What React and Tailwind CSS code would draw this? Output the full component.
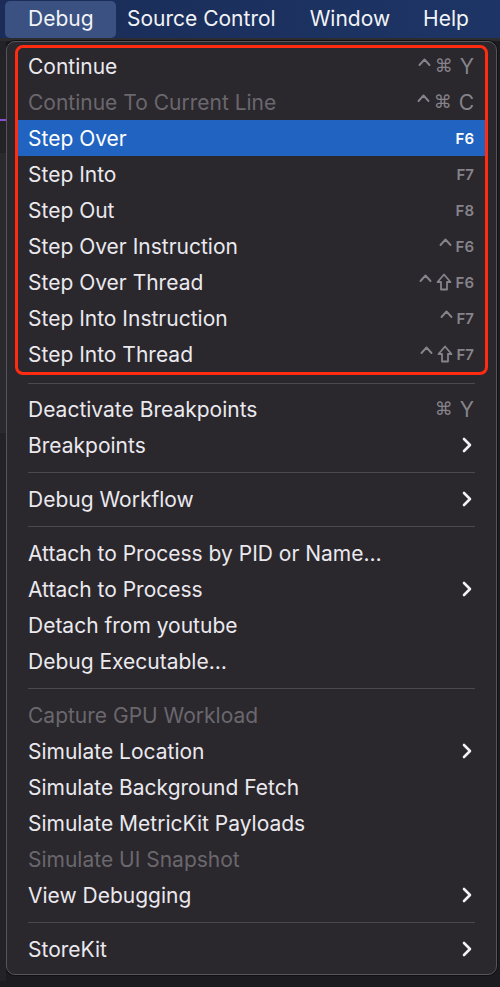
import React from "react";

const Chevron = () => (
  <svg width="10" height="16" viewBox="0 0 10 16" className="shrink-0">
    <polyline points="2,2 8,8 2,14" fill="none" stroke="#f2f1f4" strokeWidth="2.6" strokeLinecap="round" strokeLinejoin="round" />
  </svg>
);

const Caret = ({ color }) => (
  <svg width="13" height="18" viewBox="0 0 13 18" className="shrink-0">
    <polyline points="1.5,8 6.5,2.5 11.5,8" fill="none" stroke={color} strokeWidth="1.9" strokeLinecap="round" strokeLinejoin="round" />
  </svg>
);

const Shift = ({ color }) => (
  <svg width="16" height="18" viewBox="0 0 16 18" className="shrink-0">
    <path d="M8 1.5 L14.5 9 H11 V16.5 H5 V9 H1.5 Z" fill="none" stroke={color} strokeWidth="1.8" strokeLinejoin="round" />
  </svg>
);

function Shortcut({ caret, cmd, shift, keyName, fkey, active }) {
  const hex = active ? "#ffffff" : "#86848a";
  const color = active ? "text-white" : "text-[#86848a]";
  return (
    <span className={`flex items-center gap-[4px] ${color}`}>
      {caret && <Caret color={hex} />}
      {cmd && (
        <span className="text-[18px] leading-none" style={{ fontFamily: "'DejaVu Sans', sans-serif" }}>
          ⌘
        </span>
      )}
      {shift && <Shift color={hex} />}
      {keyName && <span className="text-[21px] leading-none ml-[3px]">{keyName}</span>}
      {fkey && <span className="text-[15px] font-semibold leading-none">{fkey}</span>}
    </span>
  );
}

function Row({ label, disabled, active, shortcut, sub }) {
  return (
    <div
      className={`h-[36px] flex items-center justify-between pl-[10px] pr-[11px] ${
        active ? "bg-[#2163c0] text-white" : disabled ? "text-[#6a676d]" : "text-[#ebe9ee]"
      }`}
    >
      <span className="text-[21px] leading-none">{label}</span>
      {shortcut && <Shortcut {...shortcut} active={active} />}
      {sub && <span className="pr-[2px]"><Chevron /></span>}
    </div>
  );
}

function Sep({ h = "h-[18px]" }) {
  return (
    <div className={`${h} flex items-center px-[10px]`}>
      <div className="h-px w-full bg-[#4b484e]" />
    </div>
  );
}

export default function App() {
  return (
    <div className="w-[500px] h-[987px] bg-[#1c1b1f] overflow-hidden relative" style={{ fontFamily: "Inter, 'DejaVu Sans', sans-serif" }}>
      {/* menu bar */}
      <div className="h-[38px] bg-gradient-to-r from-[#1a2c57] to-[#1d3566] flex items-center text-[21px] text-[#f2f3f7]">
        <div className="ml-[5px] h-[37px] w-[111px] rounded-[5px] bg-[#3a5182] flex items-center pl-[23px]">Debug</div>
        <div className="ml-[11px]">Source Control</div>
        <div className="ml-[34px]">Window</div>
        <div className="ml-[33px]">Help</div>
      </div>
      <div className="h-[3px] bg-[#2c2b2f]" />
      {/* left background strip */}
      <div className="absolute left-0 top-[41px] w-[6px] h-[940px] bg-[#232226]">
        <div className="absolute top-[78px] left-0 w-[6px] h-[2px] bg-[#8a4fd0]" />
        <div className="absolute top-[112px] left-0 w-[6px] h-[280px] bg-[#2a292d]" />
      </div>
      {/* menu panel */}
      <div className="ml-[6px] w-[491px] rounded-[9px] border border-[#57555b] bg-[#2a272d] pt-[3px] pb-[7px] px-[8px] shadow-[0_0_0_1px_#111]">
        <div className="border-[3px] border-[#ff2c12] rounded-[8px] overflow-hidden">
          <Row label="Continue" shortcut={{ caret: true, cmd: true, keyName: "Y" }} />
          <Row label="Continue To Current Line" disabled shortcut={{ caret: true, cmd: true, keyName: "C" }} />
          <Row label="Step Over" active shortcut={{ fkey: "F6" }} />
          <Row label="Step Into" shortcut={{ fkey: "F7" }} />
          <Row label="Step Out" shortcut={{ fkey: "F8" }} />
          <Row label="Step Over Instruction" shortcut={{ caret: true, fkey: "F6" }} />
          <Row label="Step Over Thread" shortcut={{ caret: true, shift: true, fkey: "F6" }} />
          <Row label="Step Into Instruction" shortcut={{ caret: true, fkey: "F7" }} />
          <Row label="Step Into Thread" shortcut={{ caret: true, shift: true, fkey: "F7" }} />
        </div>
        <div className="px-[3px]">
          <Sep h="h-[16px]" />
          <Row label="Deactivate Breakpoints" shortcut={{ cmd: true, keyName: "Y" }} />
          <Row label="Breakpoints" sub />
          <Sep />
          <Row label="Debug Workflow" sub />
          <Sep />
          <Row label="Attach to Process by PID or Name…" />
          <Row label="Attach to Process" sub />
          <Row label="Detach from youtube" />
          <Row label="Debug Executable…" />
          <Sep />
          <Row label="Capture GPU Workload" disabled />
          <Row label="Simulate Location" sub />
          <Row label="Simulate Background Fetch" />
          <Row label="Simulate MetricKit Payloads" />
          <Row label="Simulate UI Snapshot" disabled />
          <Row label="View Debugging" sub />
          <Sep />
          <Row label="StoreKit" sub />
        </div>
      </div>
    </div>
  );
}
